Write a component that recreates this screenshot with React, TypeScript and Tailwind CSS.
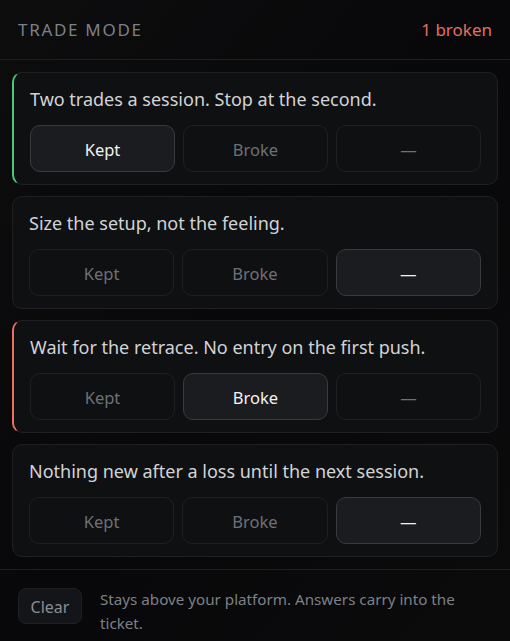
import React from "react";

type Choice = "kept" | "broke" | "none";

const rules: { text: string; choice: Choice }[] = [
  { text: "Two trades a session. Stop at the second.", choice: "kept" },
  { text: "Size the setup, not the feeling.", choice: "none" },
  { text: "Wait for the retrace. No entry on the first push.", choice: "broke" },
  { text: "Nothing new after a loss until the next session.", choice: "none" },
];

function Btn({ label, active }: { label: string; active: boolean }) {
  return (
    <button
      className={
        active
          ? "flex-1 h-[47px] pt-[3px] rounded-[10px] border border-[#3a3b3f] bg-[#1b1c1f] text-[#f2f2f3] text-[16.5px]"
          : "flex-1 h-[47px] pt-[3px] rounded-[10px] border border-[#1f2023] bg-[#0f1012] text-[#6e7076] text-[16.5px]"
      }
    >
      {label}
    </button>
  );
}

export default function App() {
  return (
    <div
      className="w-[510px] h-[641px] bg-gradient-to-br from-[#0d0d0e] via-[#08080a] to-[#0b0b0c] flex flex-col overflow-hidden"
      style={{ fontFamily: '"Noto Sans", "Open Sans", sans-serif' }}
    >
      <div className="h-[60px] flex items-center justify-between px-[18px] border-b border-[#1e1f22] shrink-0">
        <span className="text-[17px] tracking-[0.1em] text-[#7d8087]">TRADE MODE</span>
        <span className="text-[17px] text-[#e0705f]">1 broken</span>
      </div>
      <div className="flex flex-col gap-[11px] px-3 pt-3 pb-3 border-b border-[#1e1f22]">
        {rules.map((r, i) => (
          <div
            key={i}
            className={
              r.choice === "kept"
                ? "rounded-[10px] border border-[#1f2023] border-l-2 border-l-[#4cc97a] bg-[#0f1012] px-4 pt-3 pb-3 flex flex-col gap-3"
                : r.choice === "broke"
                ? "rounded-[10px] border border-[#1f2023] border-l-2 border-l-[#e8715f] bg-[#0f1012] px-4 pt-3 pb-3 flex flex-col gap-3"
                : "rounded-[10px] border border-[#1f2023] bg-[#0f1012] px-4 pt-3 pb-3 flex flex-col gap-3"
            }
          >
            <div className="text-[18px] leading-[28px] text-[#d2d3d6]">{r.text}</div>
            <div className="flex gap-2">
              <Btn label="Kept" active={r.choice === "kept"} />
              <Btn label="Broke" active={r.choice === "broke"} />
              <Btn label="—" active={r.choice === "none"} />
            </div>
          </div>
        ))}
      </div>
      <div className="flex items-start gap-[18px] px-[18px] pt-[17px]">
        <button className="mt-[1px] pt-[2px] w-[64px] h-[36px] rounded-[8px] border border-[#1f2023] bg-[#141518] text-[#8a8d93] text-[16px] shrink-0">
          Clear
        </button>
        <p className="text-[15.2px] leading-[24px] text-[#7d8087]">
          Stays above your platform. Answers carry into the ticket.
        </p>
      </div>
    </div>
  );
}
